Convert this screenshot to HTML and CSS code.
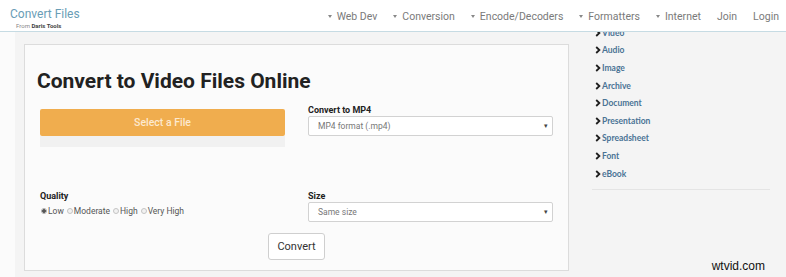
FILE: index.html
```html
<!DOCTYPE html>
<html>
<head>
<meta charset="utf-8">
<link rel="stylesheet" href="styles.css">
</head>
<body>
<header class="topbar">
  <div class="brand">
    <div class="logo">Convert Files</div>
    <div class="from">From <b>Daris Tools</b></div>
  </div>
  <nav class="nav">
    <span class="nav-item"><i class="caret"></i>Web Dev</span>
    <span class="nav-item"><i class="caret"></i>Conversion</span>
    <span class="nav-item"><i class="caret"></i>Encode/Decoders</span>
    <span class="nav-item"><i class="caret"></i>Formatters</span>
    <span class="nav-item"><i class="caret"></i>Internet</span>
    <span class="nav-item">Join</span>
    <span class="nav-item">Login</span>
  </nav>
</header>

<div class="page">
  <main class="main">
    <section class="card">
      <h1 class="title">Convert to Video Files Online</h1>
      <div class="row row-top">
        <div class="col">
          <div class="file-btn">Select a File</div>
          <div class="file-shadow"></div>
        </div>
        <div class="col">
          <div class="label">Convert to MP4</div>
          <div class="select"><span>MP4 format (.mp4)</span><i class="sel-caret">▾</i></div>
        </div>
      </div>
      <div class="row row-bottom">
        <div class="col">
          <div class="label">Quality</div>
          <div class="radios">
            <span class="radio checked"></span><span class="rlabel">Low</span>
            <span class="radio"></span><span class="rlabel">Moderate</span>
            <span class="radio"></span><span class="rlabel">High</span>
            <span class="radio"></span><span class="rlabel">Very High</span>
          </div>
        </div>
        <div class="col">
          <div class="label">Size</div>
          <div class="select"><span>Same size</span><i class="sel-caret">▾</i></div>
        </div>
      </div>
      <div class="actions">
        <div class="convert-btn">Convert</div>
      </div>
    </section>
  </main>
  <aside class="sidebar">
    <ul class="cats">
      <li><svg class="chev" viewBox="0 0 6 8"><path d="M1.2 1 L4.4 4 L1.2 7" /></svg>Video</li>
      <li><svg class="chev" viewBox="0 0 6 8"><path d="M1.2 1 L4.4 4 L1.2 7" /></svg>Audio</li>
      <li><svg class="chev" viewBox="0 0 6 8"><path d="M1.2 1 L4.4 4 L1.2 7" /></svg>Image</li>
      <li><svg class="chev" viewBox="0 0 6 8"><path d="M1.2 1 L4.4 4 L1.2 7" /></svg>Archive</li>
      <li><svg class="chev" viewBox="0 0 6 8"><path d="M1.2 1 L4.4 4 L1.2 7" /></svg>Document</li>
      <li><svg class="chev" viewBox="0 0 6 8"><path d="M1.2 1 L4.4 4 L1.2 7" /></svg>Presentation</li>
      <li><svg class="chev" viewBox="0 0 6 8"><path d="M1.2 1 L4.4 4 L1.2 7" /></svg>Spreadsheet</li>
      <li><svg class="chev" viewBox="0 0 6 8"><path d="M1.2 1 L4.4 4 L1.2 7" /></svg>Font</li>
      <li><svg class="chev" viewBox="0 0 6 8"><path d="M1.2 1 L4.4 4 L1.2 7" /></svg>eBook</li>
    </ul>
    <div class="watermark">wtvid.com</div>
  </aside>
</div>
</body>
</html>
```

FILE: styles.css
```css
* { box-sizing: border-box; }
html, body { margin: 0; padding: 0; }
body {
  background: #fbfbfb;
  font-family: Roboto, "Liberation Sans", sans-serif;
  width: 786px;
  height: 277px;
  overflow: hidden;
}

/* Header (fixed, overlays scrolled content) */
.topbar {
  position: fixed;
  top: 0;
  left: 0;
  right: 0;
  height: 32px;
  background: #fff;
  border-bottom: 1px solid #c6dbe3;
  display: flex;
  justify-content: space-between;
  align-items: flex-start;
  padding: 0 7px 0 10px;
  z-index: 10;
}
.brand { padding-top: 7px; }
.logo {
  font-size: 12px;
  line-height: 14px;
  color: #6a9db6;
}
.from {
  font-size: 6px;
  line-height: 7px;
  color: #888;
  padding-left: 6px;
  margin-top: 1px;
}
.from b { color: #444; }
.nav {
  display: flex;
  align-items: center;
  gap: 16px;
  height: 32px;
  padding-top: 1px;
  font-size: 10.5px;
  color: #7a7a7a;
}
.nav-item { display: flex; align-items: center; }
.caret {
  display: inline-block;
  width: 0;
  height: 0;
  border-left: 2px solid transparent;
  border-right: 2px solid transparent;
  border-top: 3px solid #888;
  margin-right: 5px;
}

/* Page */
.page {
  display: flex;
  padding-left: 15px;
  height: 277px;
}
.main {
  width: 562px;
  background: #f4f4f4;
  padding: 44px 8px 0 9px;
}
.card {
  background: #fbfbfb;
  border: 1px solid #dcdcdc;
  height: 227px;
  padding: 0 15px;
}
.title {
  margin: 22px 0 0 -3px;
  font-size: 21px;
  line-height: 28px;
  font-weight: 700;
  color: #222;
}
.row {
  display: flex;
  gap: 23px;
}
.col { flex: 0 0 245px; }
.row-top { margin-top: 10px; }
.row-bottom { margin-top: 44px; }

.file-btn {
  margin-top: 4px;
  height: 27px;
  background: #f0ad4e;
  border-radius: 2px;
  color: #fde9cf;
  font-size: 10.5px;
  font-weight: 500;
  display: flex;
  align-items: center;
  justify-content: center;
}
.file-shadow {
  height: 11px;
  background: #f1f1f1;
}
.label {
  font-size: 9px;
  font-weight: 700;
  color: #222;
  line-height: 11px;
}
.select {
  margin-top: 0;
  height: 20px;
  background: #fff;
  border: 1px solid #d2d2d2;
  border-radius: 2px;
  display: flex;
  align-items: center;
  justify-content: space-between;
  padding: 0 4px 0 9px;
  font-size: 8.5px;
  color: #777;
}
.sel-caret {
  font-style: normal;
  font-size: 7px;
  color: #444;
}
.radios {
  display: flex;
  align-items: center;
  margin-top: 4px;
  font-size: 8.5px;
  color: #555;
}
.radio {
  width: 6px;
  height: 6px;
  border-radius: 50%;
  border: 1px solid #c4c4c4;
  background: #f2f2f2;
  margin: 0 1px 0 3px;
}
.radio:first-child { margin-left: 1px; }
.radio.checked {
  background: radial-gradient(circle, #555 0 1.6px, #eee 2px);
  border-color: #aaa;
}
.actions {
  display: flex;
  justify-content: center;
  margin-top: 11px;
}
.convert-btn {
  width: 57px;
  height: 27px;
  background: #fff;
  border: 1px solid #cfcfcf;
  border-radius: 3px;
  display: flex;
  align-items: center;
  justify-content: center;
  font-size: 11px;
  color: #333;
}

/* Sidebar */
.sidebar {
  flex: 1;
  background: #f4f4f4;
  padding: 24px 16px 0 15px;
  position: relative;
}
.cats {
  list-style: none;
  margin: 0;
  padding: 0 0 7px 3px;
  border-bottom: 1px solid #e4e4e4;
}
.cats li {
  display: flex;
  align-items: center;
  height: 17.6px;
  font-family: Lato, "Noto Sans", sans-serif;
  font-weight: 700;
  font-size: 8.5px;
  color: #4a7394;
}
.chev {
  width: 6px;
  height: 8px;
  margin-right: 1px;
  fill: none;
  stroke: #1e1e1e;
  stroke-width: 1.8;
}
.watermark {
  position: absolute;
  right: 21px;
  bottom: 4px;
  font-family: "Liberation Sans", Arial, sans-serif;
  font-size: 12px;
  color: #111;
}
```
